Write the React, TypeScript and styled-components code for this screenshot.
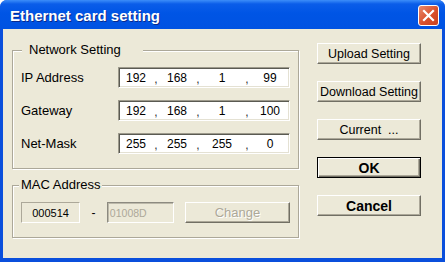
import React from "react";
import styled, { createGlobalStyle } from "styled-components";

const Global = createGlobalStyle`
	* { box-sizing: border-box; }
	body {
		margin: 0;
		background: #fff;
		font-family: "Liberation Sans", Arial, sans-serif;
	}
`;

const Window = styled.div`
	width: 445px;
	height: 262px;
	display: flex;
	flex-direction: column;
	background: #0a4fdc;
	border-radius: 7px 7px 0 0;
	overflow: hidden;
`;

const TitleBar = styled.div`
	height: 29px;
	flex: none;
	display: flex;
	align-items: center;
	justify-content: space-between;
	padding: 0 6px 0 10px;
	background: linear-gradient(#3d8ef9 0, #0b5de9 4px, #0055e5 45%, #0052e2 100%);
`;

const Title = styled.span`
	color: #fff;
	font-weight: 700;
	font-size: 15px;
	text-shadow: 1px 1px #0a2a8c;
	margin-top: 1px;
`;

const Close = styled.div`
	width: 21px;
	height: 21px;
	margin-top: 2px;
	border: 1px solid #fff;
	border-radius: 3px;
	background: linear-gradient(135deg, #e9896b 0%, #d9502c 55%, #c8411e 100%);
	display: flex;
	align-items: center;
	justify-content: center;
`;

const Client = styled.div`
	flex: 1;
	margin: 0 3px 4px 3px;
	background: #ece9d8;
	display: flex;
	padding: 14px 0 0 9px;
`;

const LeftCol = styled.div`
	width: 287px;
	display: flex;
	flex-direction: column;
	gap: 9px;
`;

const Group = styled.fieldset<{ $pad: string }>`
	margin: 0;
	padding: ${(p) => p.$pad};
	border: 1px solid #aca899;
	box-shadow: inset 1px 1px #fff, 1px 1px #fff;
	min-width: 0;
`;

const Legend = styled.legend<{ $shift: number; $padL: number; $padR: number }>`
	font-size: 13px;
	line-height: 14px;
	color: #000;
	background: #ece9d8;
	margin-left: ${(p) => p.$shift}px;
	padding: 0 ${(p) => p.$padR}px 0 ${(p) => p.$padL}px;
`;

const Rows = styled.div`
	display: flex;
	flex-direction: column;
	gap: 12px;
`;

const Row = styled.div`
	display: flex;
	align-items: center;
	height: 21px;
`;

const Label = styled.span`
	width: 97px;
	font-size: 13px;
	color: #000;
`;

const IpField = styled.div`
	width: 172px;
	height: 21px;
	background: #fff;
	border: 1px solid;
	border-color: #9d9a8c #fff #fff #9d9a8c;
	box-shadow: inset 1px 1px #5a5a52, inset -1px -1px #e4e1d3;
	display: grid;
	grid-template-columns: 34px 6px 36px 6px 42px 8px 1fr;
	align-items: center;
	text-align: center;
	font-size: 12px;
	color: #000;
`;

const Sep = styled.span`
	color: #333;
	font-size: 12px;
	padding-top: 2px;
`;

const StaticBox = styled.div`
	width: 60px;
	height: 21px;
	border: 1px solid;
	border-color: #aca899 #fff #fff #aca899;
	display: flex;
	align-items: center;
	justify-content: center;
	font-size: 11px;
	color: #000;
`;

const Dash = styled.span`
	width: 27px;
	text-align: center;
	font-size: 12px;
	color: #000;
`;

const DisabledEdit = styled.div`
	width: 68px;
	height: 21px;
	border: 1px solid;
	border-color: #8c8a80 #fff #fff #8c8a80;
	box-shadow: inset 1px 1px #bcb9aa;
	display: flex;
	align-items: center;
	padding-left: 2px;
	font-size: 10.5px;
	color: #aca899;
`;

const Button = styled.button<{ $bold?: boolean; $default?: boolean; $disabled?: boolean }>`
	width: ${(p) => (p.$disabled ? "105px" : "104px")};
	height: 21px;
	padding: 0;
	margin: 0;
	white-space: pre;
	font-family: "Liberation Sans", Arial, sans-serif;
	font-size: ${(p) => (p.$bold ? "14px" : p.$disabled ? "13px" : "12.5px")};
	font-weight: ${(p) => (p.$bold ? 700 : 400)};
	color: ${(p) => (p.$disabled ? "#aca899" : "#000")};
	text-shadow: ${(p) => (p.$disabled ? "1px 1px #fff" : "none")};
	background: #ece9d8;
	border: 1px solid;
	border-color: ${(p) => (p.$default ? "#000" : "#fff #716f64 #716f64 #fff")};
	box-shadow: ${(p) =>
		p.$default
			? "inset 1px 1px #fff, inset -1px -1px #716f64, inset -2px -2px #aca899"
			: "inset -1px -1px #aca899"};
`;

const ChangeSlot = styled.div`
	margin-left: 11px;
	display: flex;
`;

const RightCol = styled.div`
	margin-left: 18px;
	display: flex;
	flex-direction: column;
	gap: 17px;
`;

const ips = [
	{ label: "IP Address", parts: ["192", "168", "1", "99"] },
	{ label: "Gateway", parts: ["192", "168", "1", "100"] },
	{ label: "Net-Mask", parts: ["255", "255", "255", "0"] },
];

const IpInput: React.FC<{ parts: string[] }> = ({ parts }) => (
	<IpField>
		{parts.map((p, i) => (
			<React.Fragment key={i}>
				<span>{p}</span>
				{i < 3 && <Sep>,</Sep>}
			</React.Fragment>
		))}
	</IpField>
);

export default function App() {
	return (
		<>
			<Global />
			<Window>
				<TitleBar>
					<Title>Ethernet card setting</Title>
					<Close>
						<svg width="13" height="13" viewBox="0 0 13 13">
							<path d="M2 2 L11 11 M11 2 L2 11" stroke="#fff" strokeWidth="2.2" strokeLinecap="square" />
						</svg>
					</Close>
				</TitleBar>
				<Client>
					<LeftCol>
						<Group $pad="10px 8px 14px 8px">
							<Legend $shift={1} $padL={7} $padR={22}>Network Setting</Legend>
							<Rows>
								{ips.map((r) => (
									<Row key={r.label}>
										<Label>{r.label}</Label>
										<IpInput parts={r.parts} />
									</Row>
								))}
							</Rows>
						</Group>
						<Group $pad="10px 8px 14px 8px">
							<Legend $shift={-2} $padL={2} $padR={2}>MAC Address</Legend>
							<Row>
								<StaticBox>000514</StaticBox>
								<Dash>-</Dash>
								<DisabledEdit>01008D</DisabledEdit>
								<ChangeSlot>
									<Button $disabled>Change</Button>
								</ChangeSlot>
							</Row>
						</Group>
					</LeftCol>
					<RightCol>
						<Button>Upload Setting</Button>
						<Button>Download Setting</Button>
						<Button>{"Current  ..."}</Button>
						<Button $bold $default>OK</Button>
						<Button $bold>Cancel</Button>
					</RightCol>
				</Client>
			</Window>
		</>
	);
}
